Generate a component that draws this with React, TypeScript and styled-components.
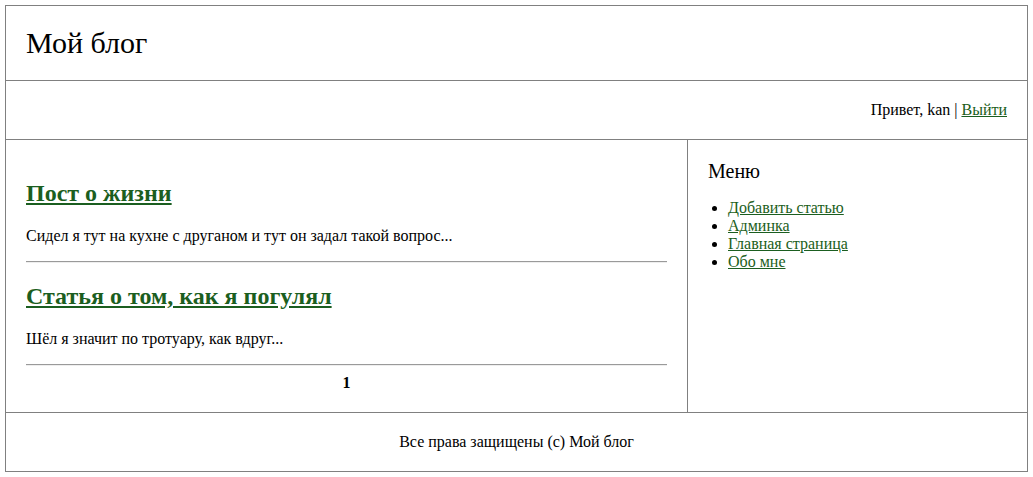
import React from "react";
import styled, { createGlobalStyle } from "styled-components";

const Global = createGlobalStyle`
  body {
    margin: 5px;
    font-family: "Liberation Serif", "Times New Roman", serif;
    font-size: 16px;
    color: #000;
    background: #fff;
  }
`;

const Frame = styled.div`
  box-sizing: border-box;
  border: 1px solid #808080;
  display: grid;
  grid-template-columns: 681px 1fr;
`;

const Cell = styled.div<{ $span?: boolean; $align?: string; $divider?: boolean }>`
  grid-column: ${(p) => (p.$span ? "1 / -1" : "auto")};
  padding: 20px;
  text-align: ${(p) => p.$align || "left"};
  border-top: ${(p) => (p.$divider ? "1px solid #808080" : "none")};
  min-width: 0;
`;

const SideCell = styled(Cell)`
  border-left: 1px solid #808080;
`;

const SiteTitle = styled.div`
  font-size: 30px;
`;

const Link = styled.a`
  color: #1b5e20;
  text-decoration: underline;
`;

const PostTitle = styled.h2`
  font-size: 24px;
  font-weight: bold;
  margin: 0.83em 0;
  a {
    color: #1b5e20;
  }
`;

const PostText = styled.p`
  margin: 16px 0;
`;

const Rule = styled.hr`
  margin: 8px 0;
  border: none;
  border-top: 1px solid #9a9a9a;
  border-bottom: 1px solid #eeeeee;
  height: 0;
`;

const Pager = styled.div`
  text-align: center;
  font-weight: bold;
`;

const MenuTitle = styled.div`
  font-size: 20px;
`;

const MenuList = styled.ul`
  margin: 16px 0;
  padding-left: 20px;
`;

const posts = [
  { title: "Пост о жизни", text: "Сидел я тут на кухне с друганом и тут он задал такой вопрос..." },
  { title: "Статья о том, как я погулял", text: "Шёл я значит по тротуару, как вдруг..." },
];

const menu = ["Добавить статью", "Админка", "Главная страница", "Обо мне"];

export default function App() {
  return (
    <>
      <Global />
      <Frame>
        <Cell $span>
          <SiteTitle>Мой блог</SiteTitle>
        </Cell>
        <Cell $span $align="right" $divider>
          Привет, kan | <Link href="#">Выйти</Link>
        </Cell>
        <Cell $divider>
          {posts.map((p) => (
            <React.Fragment key={p.title}>
              <PostTitle>
                <a href="#">{p.title}</a>
              </PostTitle>
              <PostText>{p.text}</PostText>
              <Rule />
            </React.Fragment>
          ))}
          <Pager>1</Pager>
        </Cell>
        <SideCell $divider>
          <MenuTitle>Меню</MenuTitle>
          <MenuList>
            {menu.map((m) => (
              <li key={m}>
                <Link href="#">{m}</Link>
              </li>
            ))}
          </MenuList>
        </SideCell>
        <Cell $span $align="center" $divider>
          Все права защищены (c) Мой блог
        </Cell>
      </Frame>
    </>
  );
}
